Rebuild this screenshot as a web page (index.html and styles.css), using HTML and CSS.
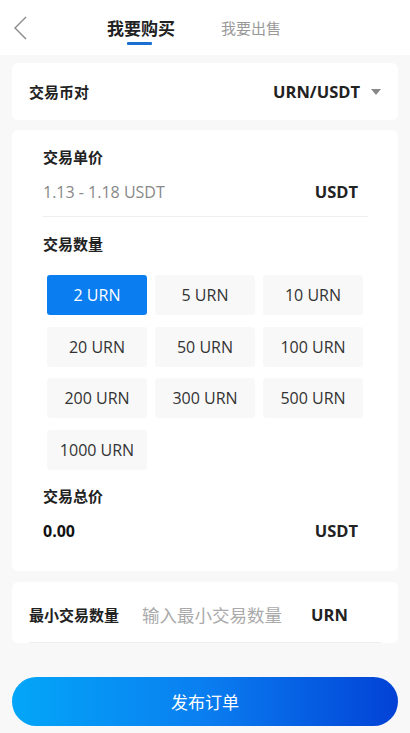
FILE: index.html
```html
<!DOCTYPE html>
<html lang="zh-CN">
    <head>
        <meta charset="UTF-8" />
        <meta name="viewport" content="width=device-width, initial-scale=1.0" />
        <title>我要购买</title>
        <link rel="stylesheet" href="styles.css">
    </head>
    <body>
        <div class="header">
            <svg class="back" viewBox="0 0 14 24">
                <path d="M13,1 L2,12 L13,23" />
            </svg>
            <div class="tabs">
                <div class="tab active">我要购买</div>
                <div class="tab">我要出售</div>
            </div>
        </div>

        <div class="card pair">
            <span class="label">交易币对</span>
            <span class="pair-select">URN/USDT <i class="caret"></i></span>
        </div>

        <div class="card trade">
            <div class="label">交易单价</div>
            <div class="row price">
                <span class="muted">1.13 - 1.18 USDT</span>
                <span class="unit">USDT</span>
            </div>

            <div class="label">交易数量</div>
            <div class="amounts">
                <div class="amount selected">2 URN</div>
                <div class="amount">5 URN</div>
                <div class="amount">10 URN</div>
                <div class="amount">20 URN</div>
                <div class="amount">50 URN</div>
                <div class="amount">100 URN</div>
                <div class="amount">200 URN</div>
                <div class="amount">300 URN</div>
                <div class="amount">500 URN</div>
                <div class="amount">1000 URN</div>
            </div>

            <div class="label">交易总价</div>
            <div class="row total">
                <span class="value">0.00</span>
                <span class="unit">USDT</span>
            </div>
        </div>

        <div class="card min">
            <div class="min-row">
                <span class="label">最小交易数量</span>
                <span class="placeholder">输入最小交易数量</span>
                <span class="unit">URN</span>
            </div>
        </div>

        <button class="submit">发布订单</button>
    </body>
</html>
```

FILE: styles.css
```css
* {
    margin: 0;
    padding: 0;
    box-sizing: border-box;
}

body {
    font-family: "Open Sans", "Noto Sans CJK SC", sans-serif;
    background: #f8f8f8;
    color: #222;
    min-height: 100vh;
}

.header {
    height: 55px;
    background: #fff;
    display: flex;
    align-items: center;
    padding-left: 13px;
    margin-bottom: 8px;
}

.back {
    width: 14px;
    height: 24px;
    fill: none;
    stroke: #888;
    stroke-width: 1.4;
}

.tabs {
    display: flex;
    align-items: center;
    gap: 46px;
    margin-left: 80px;
}

.tab {
    font-size: 15px;
    color: #999;
    position: relative;
}

.tab.active {
    font-size: 17px;
    font-weight: 700;
    color: #222;
}

.tab.active::after {
    content: "";
    position: absolute;
    left: 20px;
    bottom: -5px;
    width: 25px;
    height: 3px;
    background: #1a6fd0;
    border-radius: 1px;
}

.card {
    background: #fff;
    margin: 0 12px 10px;
    border-radius: 6px;
}

.label {
    font-size: 15px;
    font-weight: 600;
    color: #222;
}

.pair {
    height: 57px;
    display: flex;
    align-items: center;
    justify-content: space-between;
    padding: 0 17px;
}

.pair-select {
    font-size: 16.5px;
    font-weight: 700;
    display: flex;
    align-items: center;
    gap: 11px;
}

.caret {
    width: 0;
    height: 0;
    border-left: 5px solid transparent;
    border-right: 5px solid transparent;
    border-top: 6px solid #888;
}

.trade {
    padding: 16px 30px 15px 31px;
}

.row {
    display: flex;
    justify-content: space-between;
    align-items: center;
    padding-right: 10px;
    font-size: 16px;
}

.price {
    height: 50px;
    border-bottom: 1px solid #eee;
    margin-bottom: 16px;
}

.muted {
    color: #888;
}

.unit {
    font-weight: 700;
    color: #222;
    font-size: 16.5px;
}

.amounts {
    display: grid;
    grid-template-columns: repeat(3, 100px);
    gap: 11.5px 8px;
    margin: 21px 0 15px 4px;
}

.amount {
    height: 40px;
    display: flex;
    align-items: center;
    justify-content: center;
    background: #f8f8f8;
    border-radius: 3px;
    font-size: 16px;
    color: #333;
}

.amount.selected {
    background: #0a7ef0;
    color: #fff;
}

.total {
    height: 50px;
}

.value {
    font-weight: 700;
    color: #111;
}

.min {
    padding: 0 17px;
    margin-top: 11px;
}

.min-row {
    height: 61px;
    padding-top: 5px;
    display: flex;
    align-items: center;
    border-bottom: 1px solid #eee;
}

.placeholder {
    font-size: 17.5px;
    color: #aaa;
    margin-left: 23px;
    width: 169px;
}

.submit {
    display: block;
    width: 386px;
    height: 49px;
    margin: 34px 12px 0;
    border: none;
    border-radius: 25px;
    background: linear-gradient(90deg, #03a6f8, #0a7ef0 50%, #0242d6);
    color: #fff;
    font-family: "Noto Sans CJK SC", sans-serif;
    font-size: 17px;
}
```
